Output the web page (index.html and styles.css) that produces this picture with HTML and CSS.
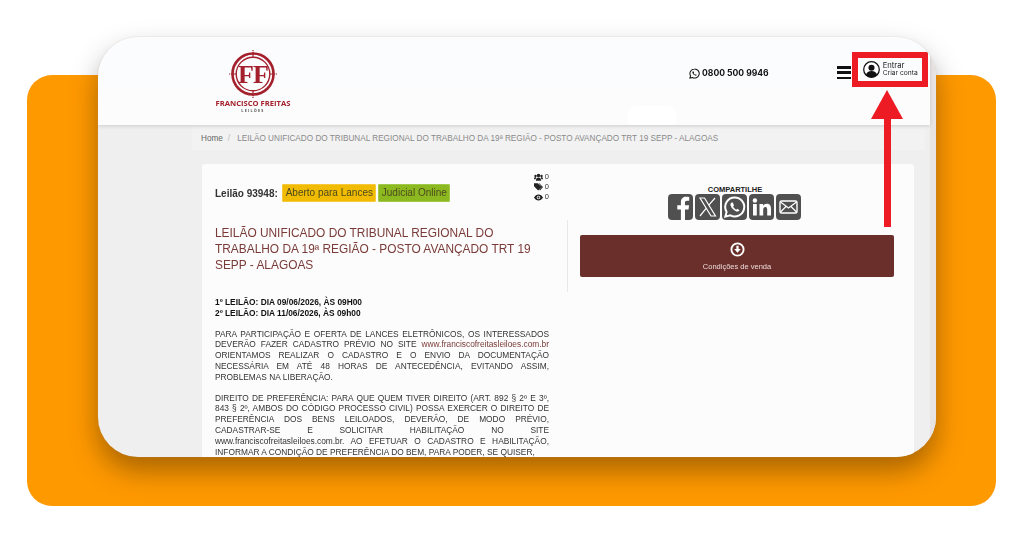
FILE: index.html
```html
<!DOCTYPE html>
<html lang="pt-BR">
<head>
<meta charset="utf-8">
<title>Francisco Freitas Leilões</title>
<link rel="stylesheet" href="styles.css">
</head>
<body>
<div class="stage">
  <div class="panel">
    <div class="window">
      <div class="viewport">
        <header class="header">
          <div class="logo">
            <svg class="logo-mark" viewBox="0 0 48 48" width="48" height="48">
              <circle cx="24" cy="24" r="20.5" fill="none" stroke="#a3202c" stroke-width="2.6"/>
              <circle cx="24" cy="24" r="16.8" fill="none" stroke="#a3202c" stroke-width="1.4"/>
              <path d="M24 0v7M24 41v7M0 24h7M41 24h7" stroke="#a3202c" stroke-width="1.2"/>
              <path d="M21 1.5h6M21 46.5h6M1.5 21v6M46.5 21v6" stroke="#fff" stroke-width="1" opacity=".7"/>
              <text x="24" y="33" text-anchor="middle" class="logo-ff">FF</text>
            </svg>
            <div class="logo-name">FRANCISCO FREITAS</div>
            <div class="logo-sub">LEILÕES</div>
          </div>
          <div class="phone">
            <svg viewBox="0 0 24 24" width="11" height="11"><path d="M12 2a10 10 0 0 0-8.6 15L2 22l5.2-1.4A10 10 0 1 0 12 2z" fill="none" stroke="#111" stroke-width="2.2"/><path d="M8.500 7c-1 .8-1.400 2-1 3.300 1 2.900 3.200 5 6 6.200 1.400.5 2.700 0 3.500-1.200l-2.400-1.700-1.200 1c-1.400-.6-2.700-1.900-3.300-3.300l1-1.200L9.600 7z" fill="#111"/></svg>
            <span>0800 500 9946</span>
          </div>
          <div class="burger"><i></i><i></i><i></i></div>
          <div class="account">
            <svg viewBox="0 0 24 24" width="17" height="17"><circle cx="12" cy="12" r="11" fill="#fff" stroke="#111" stroke-width="1.800"/><circle cx="12" cy="9.500" r="4.300" fill="#111"/><path d="M4 20c1-4.500 4-6 8-6s7 1.500 8 6a11 11 0 0 1-16 0z" fill="#111"/></svg>
            <div class="account-text"><span class="enter">Entrar</span><span class="signup">Criar conta</span></div>
          </div>
          <span class="blob"></span>
        </header>
        <nav class="crumbs"><span class="crumb-home">Home</span><span class="crumb-sep">/</span><span>LEILÃO UNIFICADO DO TRIBUNAL REGIONAL DO TRABALHO DA 19ª REGIÃO - POSTO AVANÇADO TRT 19 SEPP - ALAGOAS</span></nav>
        <main class="card">
          <div class="head">
            <strong class="lot">Leilão 93948:</strong>
            <span class="badge badge-open">Aberto para Lances</span>
            <span class="badge badge-online">Judicial Online</span>
            <ul class="stats">
              <li><svg viewBox="0 0 12 10" width="9" height="8"><circle cx="6" cy="3" r="2.300" fill="#222"/><circle cx="2" cy="3.500" r="1.600" fill="#222"/><circle cx="10" cy="3.500" r="1.600" fill="#222"/><path d="M2.500 10c0-3 1.500-4.500 3.500-4.500S9.500 7 9.500 10zM0 8c0-2 .8-3 2-3l1 1-1 2zM12 8c0-2-.8-3-2-3L9 6l1 2z" fill="#222"/></svg>0</li>
              <li><svg viewBox="0 0 12 10" width="9" height="8"><path d="M0 0h5l5 5-4.500 4.500L0 4z" fill="#222"/><path d="M7 0l5 5-4 4.500-1-.8L10 5 6 0z" fill="#222"/></svg>0</li>
              <li><svg viewBox="0 0 12 8" width="9" height="7"><path d="M0 4c1.500-2.500 3.500-4 6-4s4.500 1.500 6 4c-1.500 2.500-3.500 4-6 4S1.500 6.500 0 4z" fill="#222"/><circle cx="6" cy="4" r="2.300" fill="#fff"/><circle cx="6" cy="4" r="1.300" fill="#222"/></svg>0</li>
            </ul>
          </div>
          <div class="share">
            <div class="share-title">COMPARTILHE</div>
            <div class="share-icons">
              <span class="share-icon"><svg viewBox="0 0 25 26" width="25" height="26"><path d="M17 26V15.500h3.500l.6-4.200H17V8.700c0-1.200.4-2 2.100-2h2.100V3c-.4 0-1.700-.2-3.100-.2-3.100 0-5.200 1.900-5.200 5.300v3.200H9.300v4.200h3.600V26z" fill="#fff"/></svg></span>
              <span class="share-icon"><svg viewBox="0 0 25 26" width="25" height="26"><path d="M5 4h4.500l11 18H16zM20 4l-6.600 7.600M11.300 14.200L5 22" fill="none" stroke="#fff" stroke-width="1.200"/></svg></span>
              <span class="share-icon"><svg viewBox="0 0 25 26" width="25" height="26"><path d="M12.700 3.500a9.500 9.500 0 0 0-8.100 14.400L3.300 22.700l5-1.300a9.500 9.500 0 1 0 4.400-17.900z" fill="none" stroke="#fff" stroke-width="2"/><path d="M9.500 8.500c-1 .8-1.300 2-.9 3.100.9 2.700 3 4.700 5.700 5.800 1.300.5 2.500 0 3.200-1.100l-2.200-1.600-1.100 1c-1.300-.6-2.500-1.800-3.100-3.100l.9-1.100-1.200-2.900z" fill="#fff"/></svg></span>
              <span class="share-icon"><svg viewBox="0 0 25 26" width="25" height="26"><rect x="4" y="10" width="3.800" height="11.500" fill="#fff"/><circle cx="5.900" cy="6.500" r="2.200" fill="#fff"/><path d="M10.500 10h3.600v1.700c.7-1.200 2-2 3.800-2 3.200 0 4.100 2.100 4.100 5.200v6.600h-3.800v-5.800c0-1.700-.4-2.800-1.800-2.800-1.600 0-2.200 1.200-2.200 2.800v5.800h-3.700z" fill="#fff"/></svg></span>
              <span class="share-icon"><svg viewBox="0 0 25 26" width="25" height="26"><rect x="4" y="7" width="17" height="12" rx="1.500" fill="none" stroke="#fff" stroke-width="1.400"/><path d="M4.500 8l8 6 8-6M4.500 18l5.500-5.500M20.500 18L15 12.500" fill="none" stroke="#fff" stroke-width="1.200"/></svg></span>
            </div>
          </div>
          <h1 class="title">LEILÃO UNIFICADO DO TRIBUNAL REGIONAL DO TRABALHO DA 19ª REGIÃO - POSTO AVANÇADO TRT 19 SEPP - ALAGOAS</h1>
          <div class="actions">
            <a class="conditions">
              <svg viewBox="0 0 16 16" width="15" height="15"><circle cx="8" cy="8" r="6.500" fill="none" stroke="#fff" stroke-width="2"/><path d="M6.800 4h2.400v3.500H11.500L8 11.500 4.500 7.500h2.300z" fill="#fff"/></svg>
              <span>Condições de venda</span>
            </a>
          </div>
          <article class="body">
            <p class="dates"><strong>1º LEILÃO: DIA 09/06/2026, ÀS 09H00</strong><br><strong>2º LEILÃO: DIA 11/06/2026, ÀS 09h00</strong></p>
            <p>PARA PARTICIPAÇÃO E OFERTA DE LANCES ELETRÔNICOS, OS INTERESSADOS DEVERÃO FAZER CADASTRO PRÉVIO NO SITE <a class="link">www.franciscofreitasleiloes.com.br</a> ORIENTAMOS REALIZAR O CADASTRO E O ENVIO DA DOCUMENTAÇÃO NECESSÁRIA EM ATÉ 48 HORAS DE ANTECEDÊNCIA, EVITANDO ASSIM, PROBLEMAS NA LIBERAÇÃO.</p>
            <p>DIREITO DE PREFERÊNCIA: PARA QUE QUEM TIVER DIREITO (ART. 892 § 2º E 3º, 843 § 2º, AMBOS DO CÓDIGO PROCESSO CIVIL) POSSA EXERCER O DIREITO DE PREFERÊNCIA DOS BENS LEILOADOS, DEVERÃO, DE MODO PRÉVIO, CADASTRAR-SE E SOLICITAR HABILITAÇÃO NO SITE www.franciscofreitasleiloes.com.br. AO EFETUAR O CADASTRO E HABILITAÇÃO, INFORMAR A CONDIÇÃO DE PREFERÊNCIA DO BEM, PARA PODER, SE QUISER,</p>
          </article>
        </main>
      </div>
      <div class="scrollbar"></div>
      <div class="highlight"></div>
      <div class="arrow"><span class="arrow-head"></span><span class="arrow-shaft"></span></div>
    </div>
  </div>
</div>
</body>
</html>
```

FILE: styles.css
```css
* { box-sizing: border-box; }
html, body { margin: 0; height: 100%; background: #fff; }
body { font-family: "Liberation Sans", Arial, sans-serif; overflow: hidden; }
.stage { width: 1024px; height: 536px; padding: 75px 28px 30px 27px; }
.panel { position: relative; height: 431px; background: #ff9900; border-radius: 25px; }
.window {
  position: absolute; left: 71px; top: -38px; width: 838px; height: 420px;
  display: flex; overflow: hidden; background: #efefef;
  border-radius: 40px;
  box-shadow: 0 0 0 1px rgba(190,160,140,.1), 0 14px 28px rgba(0,0,0,.34);
}
.viewport { flex: 1; min-width: 0; display: flex; flex-direction: column; filter: blur(.3px); }
.scrollbar { width: 6px; background: #e8e4e3; }

.header {
  position: relative; flex: none; height: 88px; display: flex; align-items: flex-start;
  padding-left: 114px;
  background: linear-gradient(#fbfcfe, #fcfcfc);
  box-shadow: 0 1px 4px rgba(0,0,0,.14);
}
.blob { position: absolute; left: 530px; top: 69px; width: 48px; height: 19px; background: #fff; border-radius: 10px 10px 0 0; }
.logo { width: 82px; display: flex; flex-direction: column; align-items: center; color: #a3202c; margin-top: 13px; }
.logo-mark { display: block; }
.logo-ff { font: 700 26px "Liberation Serif", serif; fill: #a3202c; letter-spacing: -1px; }
.logo-name { font: 700 7.6px/9px "Open Sans", sans-serif; white-space: nowrap; margin-top: 1px; }
.logo-sub { font: 700 3.800px/5px "Open Sans", sans-serif; letter-spacing: 1.200px; color: #555; }
.phone { margin: 30px 0 0 395px; display: flex; align-items: center; gap: 2px; font: 700 8.600px/12px Inter, sans-serif; color: #111; }
.phone svg { display: block; }
.burger { margin: 29px 0 0 68px; width: 14px; display: flex; flex-direction: column; gap: 2.500px; }
.burger i { display: block; height: 2.800px; background: #111; }
.account { margin: 21px 0 0 8px; width: 62px; height: 23px; display: flex; align-items: center; gap: 3px; padding-left: 4px; }
.account svg { flex: none; }
.account-text { display: flex; flex-direction: column; font-family: Inter, sans-serif; color: #222; white-space: nowrap; }
.enter { font-size: 7.700px; line-height: 8px; }
.signup { font-size: 6.700px; line-height: 7.500px; }

.crumbs {
  flex: none; height: 23px; margin: 2px 5px 0 94px; padding: 0 9px;
  display: flex; align-items: center; gap: 5px; background: #f2f2f2;
  font-size: 8.200px; color: #8a8a8a; white-space: nowrap;
}
.crumb-home { color: #666; }
.crumb-sep { color: #bbb; margin-right: 2px; }

.card {
  flex: none; margin: 14px 16px 0 104px; height: 400px; background: #fcfcfc;
  border-radius: 3px;
  display: grid; grid-template-columns: 366px 1fr; grid-template-rows: 56px 72px auto; align-content: start;
}
.head { position: relative; display: flex; align-items: flex-start; gap: 2px; padding: 20px 19px 0 13px; font-size: 10px; }
.lot { color: #333; margin-top: 4px; margin-right: 2.500px; white-space: nowrap; }
.badge { height: 18px; padding: 0 3px; border-radius: 2px; font-size: 10px; line-height: 17px; color: #4d4a20; white-space: nowrap; }
.badge-open { background: #f0bb00; width: 94px; text-align: center; box-shadow: inset 0 0 0 1px #f5c93a; }
.badge-online { background: #8cb91f; width: 72px; text-align: center; box-shadow: inset 0 0 0 1px #a0c84a; }
.stats { list-style: none; margin: -12px 0 0 auto; padding: 0; font-size: 7.500px; line-height: 10px; color: #333; }
.stats li { display: flex; align-items: center; gap: 2px; justify-content: flex-end; }
.stats svg { display: block; }

.share { display: flex; flex-direction: column; align-items: center; padding: 21px 14px 0 0; }
.share-title { font-size: 7.500px; line-height: 9px; font-weight: 700; color: #222; margin-left: 2px; }
.share-icons { display: flex; gap: 2px; }
.share-icon { width: 25px; height: 26px; background: #505050; border-radius: 4px; overflow: hidden; display: block; }
.share-icon svg { display: block; }

.title {
  margin: 0; padding: 5px 13px 0 13px; border-right: 1px solid #e8e8e8;
  font-size: 11.900px; line-height: 16px; font-weight: 400; color: #7a3b38;
}
.actions { padding: 15px 20px 0 12px; }
.conditions {
  height: 42px; display: flex; flex-direction: column; align-items: center; justify-content: center; gap: 5px;
  background: #6b2f2b; border-radius: 2px; color: #eadada; font-size: 7.500px; line-height: 9px;
}
.conditions svg { display: block; }

.body { grid-column: 1; padding: 5px 19px 0 13px; font-size: 8.350px; line-height: 10.800px; color: #333; text-align: justify; }
.body p { margin: 0 0 10px; }
.body .dates { color: #111; text-align: left; margin-bottom: 10px; }
.link { color: #7a3b38; }

.highlight { position: absolute; left: 754px; top: 15px; width: 76px; height: 35px; border: 6px solid #ed1c24; }
.arrow { position: absolute; left: 773px; top: 53px; width: 32px; display: flex; flex-direction: column; align-items: center; }
.arrow-head { width: 0; height: 0; border-left: 16px solid transparent; border-right: 16px solid transparent; border-bottom: 29px solid #ed1c24; }
.arrow-shaft { width: 7px; height: 108px; background: #ed1c24; }
```
